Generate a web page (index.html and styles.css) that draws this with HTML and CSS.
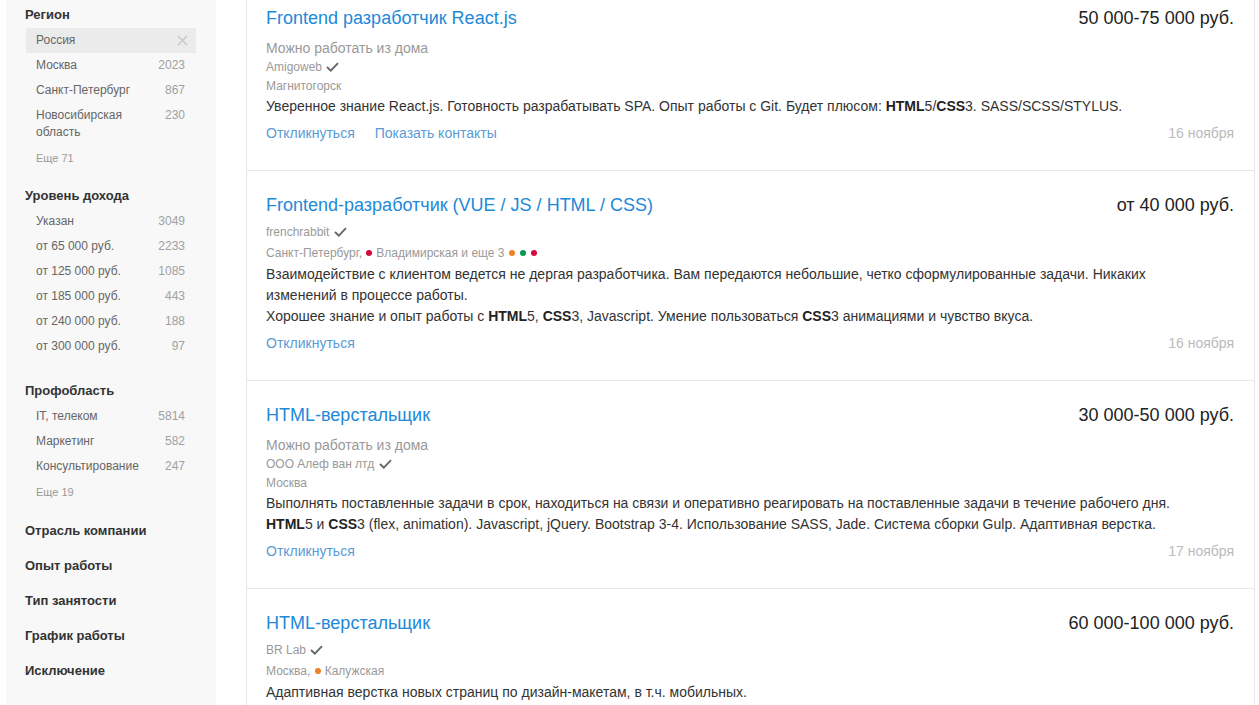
FILE: index.html
```html
<!DOCTYPE html>
<html lang="ru">
<head>
    <meta charset="UTF-8">
    <title>Вакансии</title>
    <link rel="stylesheet" href="styles.css">
</head>
<body>
<div class="page">
    <aside class="filters">
        <div class="filter">
            <div class="filter__title">Регион</div>
            <ul class="filter__list">
                <li class="filter__item filter__item_selected"><span>Россия</span>
                    <svg class="filter__clear" width="11" height="11" viewBox="0 0 11 11"><path d="M1 1L10 10M10 1L1 10" stroke="#c4c4c4" stroke-width="1.2"/></svg>
                </li>
                <li class="filter__item"><span>Москва</span><span class="filter__count">2023</span></li>
                <li class="filter__item"><span>Санкт-Петербург</span><span class="filter__count">867</span></li>
                <li class="filter__item"><span>Новосибирская<br>область</span><span class="filter__count">230</span></li>
            </ul>
            <div class="filter__more">Еще 71</div>
        </div>
        <div class="filter filter_plain">
            <div class="filter__title">Уровень дохода</div>
            <ul class="filter__list">
                <li class="filter__item"><span>Указан</span><span class="filter__count">3049</span></li>
                <li class="filter__item"><span>от 65 000 руб.</span><span class="filter__count">2233</span></li>
                <li class="filter__item"><span>от 125 000 руб.</span><span class="filter__count">1085</span></li>
                <li class="filter__item"><span>от 185 000 руб.</span><span class="filter__count">443</span></li>
                <li class="filter__item"><span>от 240 000 руб.</span><span class="filter__count">188</span></li>
                <li class="filter__item"><span>от 300 000 руб.</span><span class="filter__count">97</span></li>
            </ul>
        </div>
        <div class="filter filter_last-open">
            <div class="filter__title">Профобласть</div>
            <ul class="filter__list">
                <li class="filter__item"><span>IT, телеком</span><span class="filter__count">5814</span></li>
                <li class="filter__item"><span>Маркетинг</span><span class="filter__count">582</span></li>
                <li class="filter__item"><span>Консультирование</span><span class="filter__count">247</span></li>
            </ul>
            <div class="filter__more">Еще 19</div>
        </div>
        <div class="filter filter_closed"><div class="filter__title">Отрасль компании</div></div>
        <div class="filter filter_closed"><div class="filter__title">Опыт работы</div></div>
        <div class="filter filter_closed"><div class="filter__title">Тип занятости</div></div>
        <div class="filter filter_closed"><div class="filter__title">График работы</div></div>
        <div class="filter filter_closed"><div class="filter__title">Исключение</div></div>
    </aside>

    <main class="results">
        <div class="vacancy">
            <div class="vacancy__head">
                <a class="vacancy__title" href="#">Frontend разработчик React.js</a>
                <span class="vacancy__salary">50 000-75 000 руб.</span>
            </div>
            <div class="vacancy__remote">Можно работать из дома</div>
            <div class="vacancy__company">Amigoweb
                <svg class="check" width="13" height="10" viewBox="0 0 13 10"><path d="M1 5L4.8 8.6L12 1.2" fill="none" stroke="#666" stroke-width="1.9"/></svg>
            </div>
            <div class="vacancy__address">Магнитогорск</div>
            <div class="vacancy__desc">
                <div>Уверенное знание React.js. Готовность разрабатывать SPA. Опыт работы с Git. Будет плюсом: <b>HTML</b>5/<b>CSS</b>3. SASS/SCSS/STYLUS.</div>
            </div>
            <div class="vacancy__foot">
                <div class="vacancy__actions">
                    <a href="#">Откликнуться</a>
                    <a href="#">Показать контакты</a>
                </div>
                <span class="vacancy__date">16 ноября</span>
            </div>
        </div>

        <div class="vacancy">
            <div class="vacancy__head">
                <a class="vacancy__title" href="#">Frontend-разработчик (VUE / JS / HTML / CSS)</a>
                <span class="vacancy__salary">от 40 000 руб.</span>
            </div>
            <div class="vacancy__company">frenchrabbit
                <svg class="check" width="13" height="10" viewBox="0 0 13 10"><path d="M1 5L4.8 8.6L12 1.2" fill="none" stroke="#666" stroke-width="1.9"/></svg>
            </div>
            <div class="vacancy__address vacancy__address_metro">Санкт-Петербург, <i class="metro metro_red"></i>Владимирская и еще 3 <i class="metro metro_orange"></i><i class="metro metro_green"></i><i class="metro metro_red"></i></div>
            <div class="vacancy__desc">
                <div>Взаимодействие с клиентом ведется не дергая разработчика. Вам передаются небольшие, четко сформулированные задачи. Никаких изменений в процессе работы.</div>
                <div>Хорошее знание и опыт работы с <b>HTML</b>5, <b>CSS</b>3, Javascript. Умение пользоваться <b>CSS</b>3 анимациями и чувство вкуса.</div>
            </div>
            <div class="vacancy__foot">
                <div class="vacancy__actions">
                    <a href="#">Откликнуться</a>
                </div>
                <span class="vacancy__date">16 ноября</span>
            </div>
        </div>

        <div class="vacancy">
            <div class="vacancy__head">
                <a class="vacancy__title" href="#">HTML-верстальщик</a>
                <span class="vacancy__salary">30 000-50 000 руб.</span>
            </div>
            <div class="vacancy__remote">Можно работать из дома</div>
            <div class="vacancy__company">ООО Алеф ван лтд
                <svg class="check" width="13" height="10" viewBox="0 0 13 10"><path d="M1 5L4.8 8.6L12 1.2" fill="none" stroke="#666" stroke-width="1.9"/></svg>
            </div>
            <div class="vacancy__address">Москва</div>
            <div class="vacancy__desc">
                <div>Выполнять поставленные задачи в срок, находиться на связи и оперативно реагировать на поставленные задачи в течение рабочего дня.</div>
                <div><b>HTML</b>5 и <b>CSS</b>3 (flex, animation). Javascript, jQuery. Bootstrap 3-4. Использование SASS, Jade. Система сборки Gulp. Адаптивная верстка.</div>
            </div>
            <div class="vacancy__foot">
                <div class="vacancy__actions">
                    <a href="#">Откликнуться</a>
                </div>
                <span class="vacancy__date">17 ноября</span>
            </div>
        </div>

        <div class="vacancy">
            <div class="vacancy__head">
                <a class="vacancy__title" href="#">HTML-верстальщик</a>
                <span class="vacancy__salary">60 000-100 000 руб.</span>
            </div>
            <div class="vacancy__company">BR Lab
                <svg class="check" width="13" height="10" viewBox="0 0 13 10"><path d="M1 5L4.8 8.6L12 1.2" fill="none" stroke="#666" stroke-width="1.9"/></svg>
            </div>
            <div class="vacancy__address vacancy__address_metro">Москва, <i class="metro metro_orange"></i>Калужская</div>
            <div class="vacancy__desc">
                <div>Адаптивная верстка новых страниц по дизайн-макетам, в т.ч. мобильных.</div>
            </div>
        </div>
    </main>
</div>
</body>
</html>
```

FILE: styles.css
```css
body {
    font-family: "Liberation Sans", Arial, sans-serif;
    margin: 0;
    padding: 0;
    background-color: #fff;
    color: #333;
    overflow: hidden;
}
.page {
    display: flex;
    gap: 30px;
    padding: 0 4px 0 6px;
    height: 100vh;
}

/* filters */
.filters {
    width: 210px;
    flex-shrink: 0;
    box-sizing: border-box;
    padding: 7px 20px 0 19px;
    background-color: #f8f8f8;
}
.filter {
    margin-bottom: 22px;
}
.filter_plain {
    margin-bottom: 24px;
}
.filter_last-open {
    margin-bottom: 23px;
}
.filter_closed {
    margin-bottom: 19px;
}
.filter__title {
    font-size: 13px;
    font-weight: bold;
    line-height: 16px;
    color: #333;
    margin-bottom: 5px;
}
.filter_closed .filter__title {
    margin-bottom: 0;
}
.filter__list {
    list-style: none;
    margin: 0;
    padding: 0 0 0 1px;
}
.filter__item {
    display: flex;
    justify-content: space-between;
    align-items: flex-start;
    padding: 4px 11px 4px 10px;
    font-size: 12px;
    line-height: 17px;
    color: #666;
}
.filter__item_selected {
    background-color: #ebebeb;
    padding-right: 8px;
}
.filter__clear {
    margin-top: 3px;
}
.filter__count {
    color: #a0a0a0;
}
.filter__more {
    margin: 5px 0 0 11px;
    font-size: 11px;
    line-height: 16px;
    color: #999;
}

/* results */
.results {
    flex: 1;
    min-width: 0;
    margin-top: -16px;
    border-left: 1px solid #e6e6e6;
    border-right: 1px solid #e6e6e6;
}
.vacancy {
    padding: 24px 20px 27px 19px;
    border-bottom: 1px solid #e6e6e6;
}
.vacancy__head {
    display: flex;
    justify-content: space-between;
    font-size: 18px;
    line-height: 20px;
    margin-bottom: 8px;
}
.vacancy__title {
    color: #2189d9;
    text-decoration: none;
}
.vacancy__salary {
    color: #222;
}
.vacancy__remote {
    font-size: 14px;
    line-height: 20px;
    padding-top: 2px;
    color: #999;
}
.vacancy__company,
.vacancy__address {
    font-size: 12px;
    line-height: 19px;
    color: #999;
}
.vacancy__head + .vacancy__company {
    margin-top: 1px;
}
.vacancy__address_metro {
    line-height: 22px;
}
.check {
    margin-left: 1px;
    vertical-align: -1px;
}
.metro {
    display: inline-block;
    width: 6px;
    height: 6px;
    border-radius: 50%;
    margin: 0 4px 1px 1px;
    vertical-align: middle;
}
.metro_red {
    background-color: #d6083b;
}
.metro_orange {
    background-color: #ef7e24;
}
.metro_green {
    background-color: #029a55;
}
.vacancy__desc {
    max-width: 920px;
    font-size: 14px;
    line-height: 21px;
    color: #333;
}
.vacancy__desc b {
    color: #222;
}
.vacancy__foot {
    display: flex;
    justify-content: space-between;
    margin-top: 6px;
    font-size: 14px;
    line-height: 20px;
}
.vacancy__actions {
    display: flex;
    gap: 20px;
}
.vacancy__actions a {
    color: #5a9bd6;
    text-decoration: none;
}
.vacancy__date {
    color: #bbb;
}
```
